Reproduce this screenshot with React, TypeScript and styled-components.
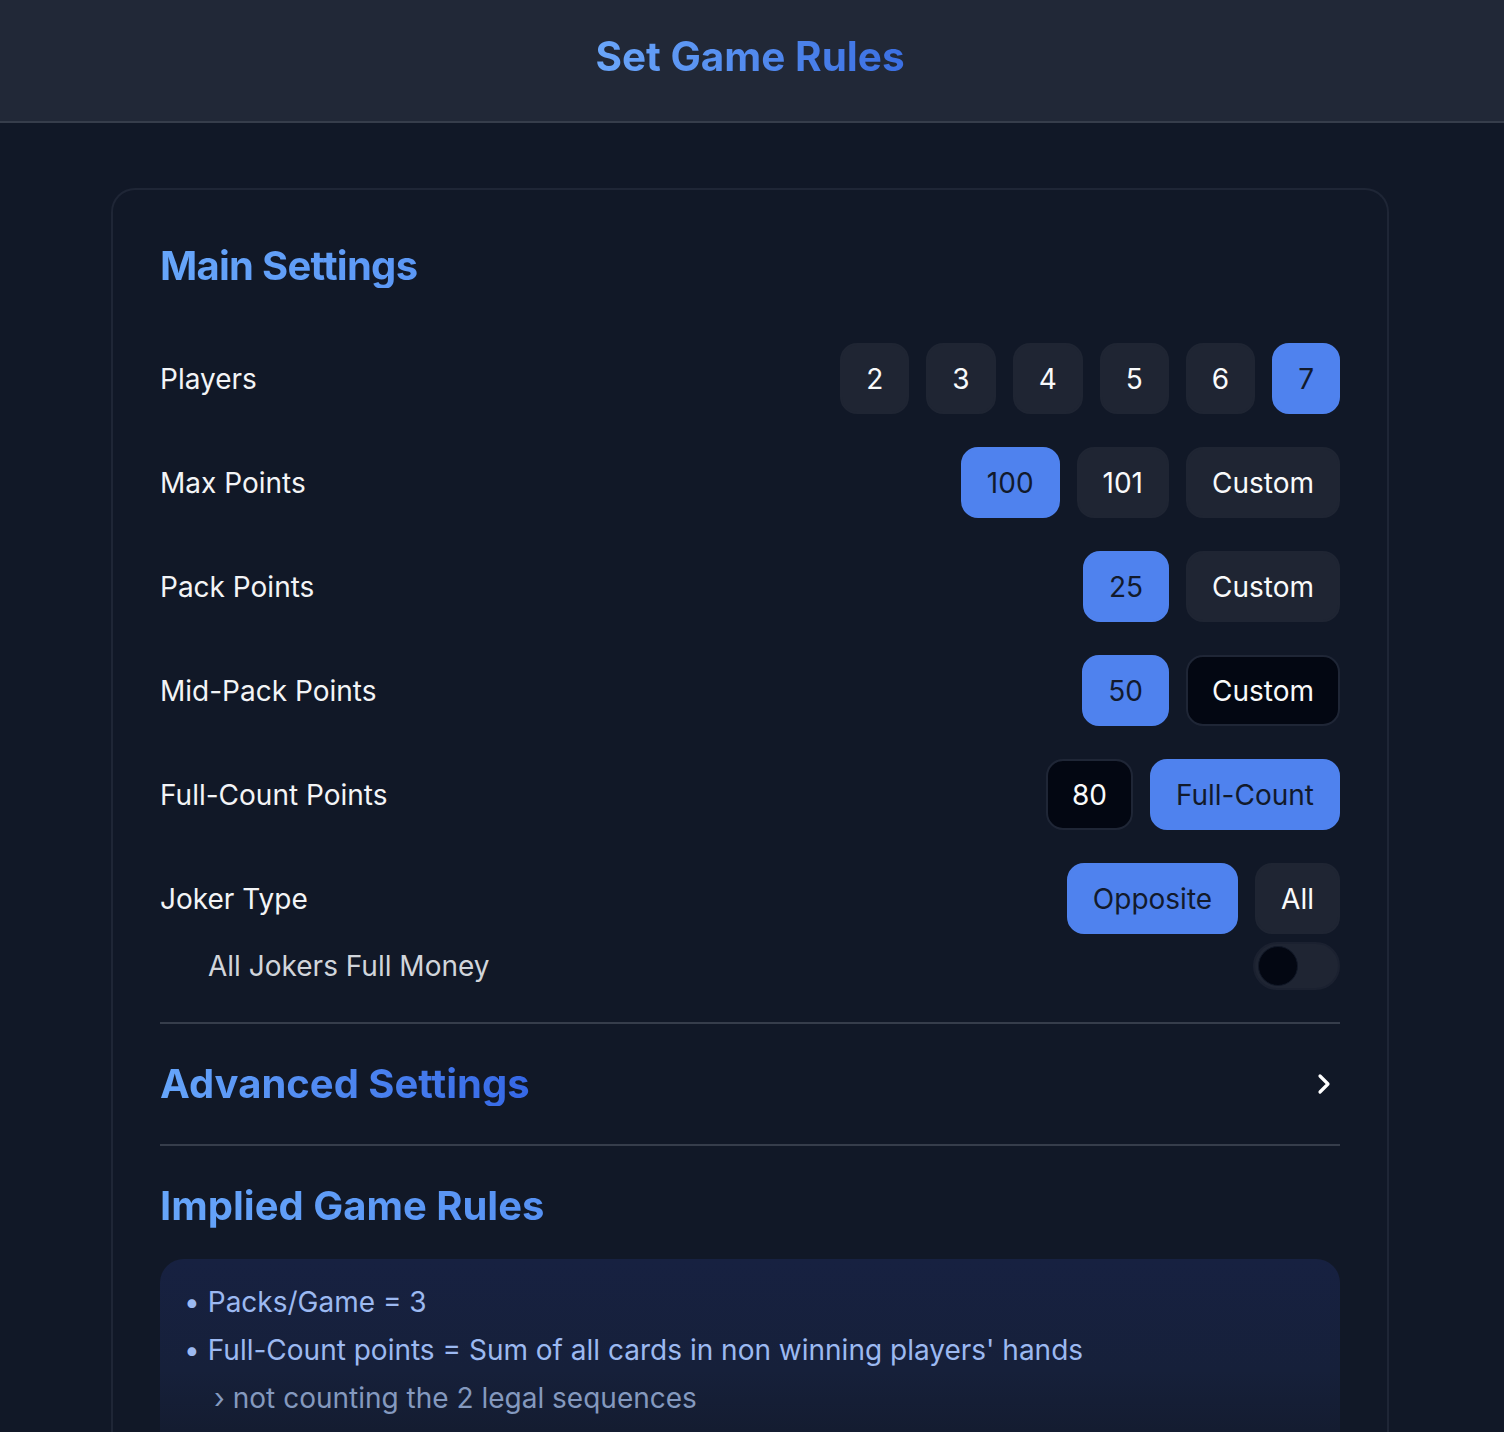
import React, { useState } from "react";
import styled, { createGlobalStyle } from "styled-components";
import { ChevronRight } from "lucide-react";

const GlobalStyle = createGlobalStyle`
  html, body {
    margin: 0;
    padding: 0;
    background: #111827;
    font-family: Inter, "Noto Sans", "Liberation Sans", sans-serif;
    color: #f3f4f6;
  }
  * { box-sizing: border-box; }
`;

const Page = styled.div`
  min-height: 1432px;
  background: #111827;
`;

const Header = styled.header`
  height: 123px;
  background: #212837;
  border-bottom: 2px solid #363d4b;
  display: flex;
  align-items: center;
  justify-content: center;
  padding: 0 4px 8px 0;
`;

const Title = styled.h1`
  margin: 0;
  font-size: 40.5px;
  font-weight: 700;
  line-height: 48px;
  background: linear-gradient(90deg, #6aa6fa 0%, #3b6fe2 100%);
  -webkit-background-clip: text;
  background-clip: text;
  color: transparent;
`;

const Main = styled.main`
  padding: 65px 4px 0 0;
`;

const Card = styled.section`
  width: 1278px;
  margin: 0 auto;
  border: 2px solid #1f2636;
  border-bottom: none;
  border-radius: 24px 24px 0 0;
  padding: 47px 47px 40px;
`;

const Heading = styled.h2<{ $inline?: boolean; $tight?: boolean }>`
  margin: 0;
  font-size: 40px;
  font-weight: 700;
  line-height: 44px;
  letter-spacing: ${(p) => (p.$tight ? "-0.75px" : "0")};
  display: ${(p) => (p.$inline ? "inline-block" : "block")};
  background: linear-gradient(90deg, #66a5fa 0%, #3567e6 100%);
  -webkit-background-clip: text;
  background-clip: text;
  color: transparent;
`;

const MainHeading = styled(Heading)`
  margin-top: 7px;
  margin-bottom: 55px;
`;

const SettingsList = styled.div`
  display: flex;
  flex-direction: column;
  gap: 33px;
`;

const SettingGroup = styled.div`
  display: flex;
  flex-direction: column;
  gap: 8px;
`;

const Row = styled.div`
  display: flex;
  align-items: center;
  justify-content: space-between;
  height: 71px;
`;

const Label = styled.span`
  font-size: 28px;
  color: #f3f4f6;
`;

const Options = styled.div`
  display: flex;
  gap: 17px;
`;

type Variant = "default" | "selected" | "pressed";

const OptionButton = styled.button<{ $variant: Variant }>`
  height: 71px;
  padding: 0 24px;
  border-radius: 17px;
  font-family: inherit;
  font-size: 28px;
  line-height: 1;
  cursor: pointer;
  border: 2px solid
    ${(p) =>
      p.$variant === "pressed"
        ? "#1f2636"
        : p.$variant === "selected"
        ? "#4f82ee"
        : "#1f2533"};
  background: ${(p) =>
    p.$variant === "selected"
      ? "#4f82ee"
      : p.$variant === "pressed"
      ? "#030712"
      : "#1f2533"};
  color: ${(p) => (p.$variant === "selected" ? "#121a2c" : "#f9fafb")};
`;

const SubRow = styled.div`
  display: flex;
  align-items: center;
  justify-content: space-between;
  height: 48px;
  padding-left: 48px;
`;

const SubLabel = styled.span`
  font-size: 28px;
  color: #d1d5db;
`;

const Toggle = styled.button<{ $on: boolean }>`
  width: 87px;
  height: 48px;
  border-radius: 24px;
  border: 2px solid #1b2130;
  background: ${(p) => (p.$on ? "#4f82ee" : "#1f2533")};
  padding: 0 3px;
  display: flex;
  align-items: center;
  justify-content: ${(p) => (p.$on ? "flex-end" : "flex-start")};
  cursor: pointer;
`;

const Knob = styled.span`
  width: 40px;
  height: 40px;
  border-radius: 50%;
  background: #030712;
  border: 1px solid #111827;
`;

const Divider = styled.hr`
  margin: 32px 0 0;
  border: none;
  border-top: 2px solid #363d4b;
`;

const Collapsible = styled.div`
  display: flex;
  align-items: center;
  justify-content: space-between;
  padding: 38px 0;
  cursor: pointer;
  color: #ffffff;
`;

const PlainDivider = styled.hr`
  margin: 0;
  border: none;
  border-top: 2px solid #363d4b;
`;

const ImpliedSection = styled.div`
  padding-top: 38px;
`;

const RulesBox = styled.div`
  margin-top: 31px;
  border-radius: 24px;
  background: linear-gradient(180deg, #172141 0%, #16203a 55%, #131a2c 100%);
  padding: 19px 24px 40px;
`;

const RuleList = styled.ul`
  list-style: none;
  margin: 0;
  padding: 0;
`;

const RuleItem = styled.li<{ $sub?: boolean }>`
  display: flex;
  gap: 8px;
  font-size: 28px;
  line-height: 48px;
  padding-left: ${(p) => (p.$sub ? "30px" : "0")};
  color: ${(p) => (p.$sub ? "#8499bf" : "#9cb9f1")};
`;

const Marker = styled.span`
  flex: none;
`;

type Setting = {
  label: string;
  options: { text: string; variant: Variant }[];
};

const settings: Setting[] = [
  {
    label: "Players",
    options: ["2", "3", "4", "5", "6", "7"].map((t) => ({
      text: t,
      variant: t === "7" ? "selected" : "default",
    })),
  },
  {
    label: "Max Points",
    options: [
      { text: "100", variant: "selected" },
      { text: "101", variant: "default" },
      { text: "Custom", variant: "default" },
    ],
  },
  {
    label: "Pack Points",
    options: [
      { text: "25", variant: "selected" },
      { text: "Custom", variant: "default" },
    ],
  },
  {
    label: "Mid-Pack Points",
    options: [
      { text: "50", variant: "selected" },
      { text: "Custom", variant: "pressed" },
    ],
  },
  {
    label: "Full-Count Points",
    options: [
      { text: "80", variant: "pressed" },
      { text: "Full-Count", variant: "selected" },
    ],
  },
];

const jokerOptions: { text: string; variant: Variant }[] = [
  { text: "Opposite", variant: "selected" },
  { text: "All", variant: "default" },
];

export default function App() {
  const [fullMoney, setFullMoney] = useState(false);
  return (
    <Page>
      <GlobalStyle />
      <Header>
        <Title>Set Game Rules</Title>
      </Header>
      <Main>
        <Card>
          <MainHeading $tight>Main Settings</MainHeading>
          <SettingsList>
            {settings.map((s) => (
              <Row key={s.label}>
                <Label>{s.label}</Label>
                <Options>
                  {s.options.map((o) => (
                    <OptionButton key={o.text} $variant={o.variant}>
                      {o.text}
                    </OptionButton>
                  ))}
                </Options>
              </Row>
            ))}
            <SettingGroup>
              <Row>
                <Label>Joker Type</Label>
                <Options>
                  {jokerOptions.map((o) => (
                    <OptionButton key={o.text} $variant={o.variant}>
                      {o.text}
                    </OptionButton>
                  ))}
                </Options>
              </Row>
              <SubRow>
                <SubLabel>All Jokers Full Money</SubLabel>
                <Toggle $on={fullMoney} onClick={() => setFullMoney(!fullMoney)}>
                  <Knob />
                </Toggle>
              </SubRow>
            </SettingGroup>
          </SettingsList>
          <Divider />
          <Collapsible>
            <Heading $inline>Advanced Settings</Heading>
            <ChevronRight size={32} strokeWidth={2.4} />
          </Collapsible>
          <PlainDivider />
          <ImpliedSection>
            <Heading>Implied Game Rules</Heading>
            <RulesBox>
              <RuleList>
                <RuleItem>
                  <Marker>•</Marker>
                  <span>Packs/Game = 3</span>
                </RuleItem>
                <RuleItem>
                  <Marker>•</Marker>
                  <span>
                    Full-Count points = Sum of all cards in non winning players' hands
                  </span>
                </RuleItem>
                <RuleItem $sub>
                  <Marker>›</Marker>
                  <span>not counting the 2 legal sequences</span>
                </RuleItem>
              </RuleList>
            </RulesBox>
          </ImpliedSection>
        </Card>
      </Main>
    </Page>
  );
}
